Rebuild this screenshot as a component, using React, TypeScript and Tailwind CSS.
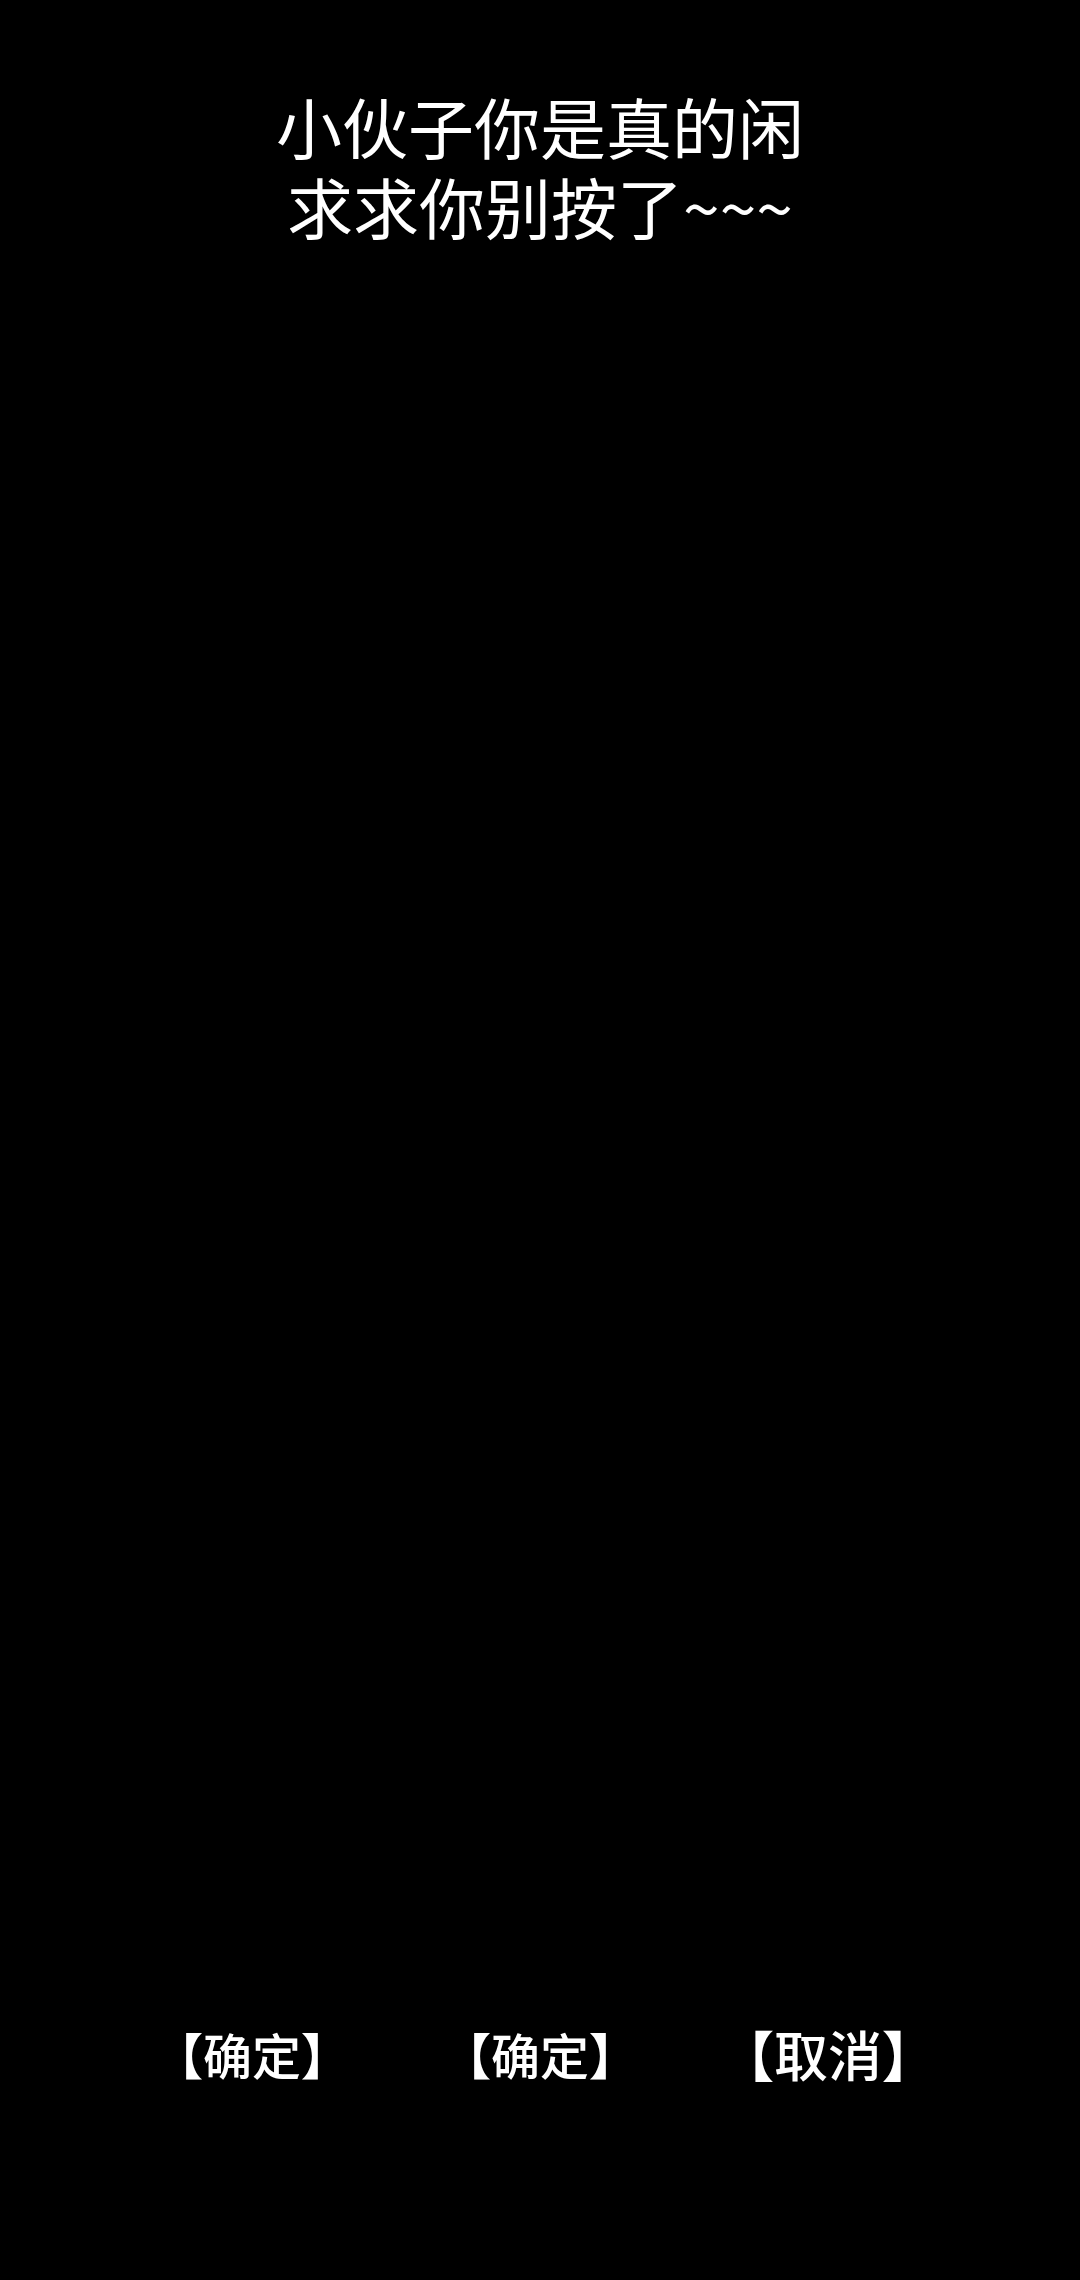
import React from "react";

const font = {
  fontFamily: '"Noto Sans CJK SC", "Noto Sans", sans-serif',
};

function ChoiceButton({ label, big }: { label: string; big?: boolean }) {
  return (
    <button
      type="button"
      className={
        big
          ? "flex items-center justify-center text-[54px] leading-[60px] font-medium text-white"
          : "flex items-center justify-center text-[49px] leading-[60px] font-medium text-white"
      }
      style={font}
    >
      <span className="font-black">【</span>
      {label}
      <span className="font-black">】</span>
    </button>
  );
}

export default function App() {
  return (
    <div
      className="flex h-[2280px] w-[1080px] flex-col items-center bg-black"
      style={font}
    >
      {/* Title */}
      <div className="pt-[85px] text-center text-[66px] leading-[80px] text-white">
        <p>小伙子你是真的闲</p>
        <p>求求你别按了~~~</p>
      </div>

      {/* Actions */}
      <div className="mt-auto mb-[196px] grid w-[864px] grid-cols-3">
        <ChoiceButton label="确定" />
        <ChoiceButton label="确定" />
        <ChoiceButton label="取消" big />
      </div>
    </div>
  );
}
